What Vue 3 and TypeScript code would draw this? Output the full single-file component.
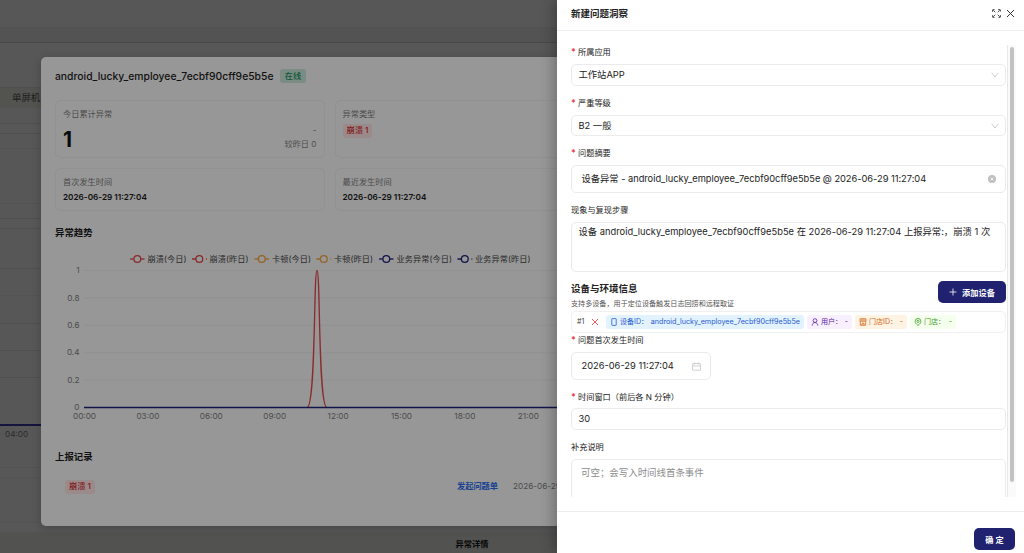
<script setup lang="ts">
interface Strip { h: number; tone: string; text?: string }
interface Legend { label: string; color: string; dashed: boolean; x: number }
interface Tag { kind: string; label: string; value: string; width: number }

const strips: Strip[] = [
  { h: 28, tone: 'head' },
  { h: 15, tone: 'bar' },
  { h: 45, tone: 'base' },
  { h: 20, tone: 'band', text: '单屏机' },
  { h: 16, tone: 'base' },
  { h: 10, tone: 'base' },
  { h: 15, tone: 'faint' },
  { h: 55, tone: 'faint' },
  { h: 15, tone: 'base' },
  { h: 10, tone: 'base' },
  { h: 40, tone: 'base' },
  { h: 27, tone: 'faint' },
  { h: 28, tone: 'base' },
  { h: 27, tone: 'base' },
  { h: 27, tone: 'base' },
  { h: 48, tone: 'axis' },
  { h: 42, tone: 'faint', text: '04:00' },
  { h: 10, tone: 'faint' },
  { h: 45, tone: 'faint' },
  { h: 10, tone: 'faint' },
  { h: 20, tone: 'foot' },
]

const red = '#8a2a2b'
const amber = '#966326'
const navy = '#12144a'
const legends: Legend[] = [
  { label: '崩溃(今日)', color: red, dashed: false, x: 75 },
  { label: '崩溃(昨日)', color: red, dashed: true, x: 137 },
  { label: '卡顿(今日)', color: amber, dashed: false, x: 199.5 },
  { label: '卡顿(昨日)', color: amber, dashed: true, x: 261.5 },
  { label: '业务异常(今日)', color: navy, dashed: false, x: 324 },
  { label: '业务异常(昨日)', color: navy, dashed: true, x: 402.5 },
]
const yTicks = ['1', '0.8', '0.6', '0.4', '0.2', '0']
const xTicks = ['00:00', '03:00', '06:00', '09:00', '12:00', '15:00', '18:00', '21:00']
const yAt = (i: number): number => 25.5 + i * 27.4
const xAt = (i: number): number => 29.5 + i * 63.4

const tags: Tag[] = [
  { kind: 'blue', label: '设备ID：', value: 'android_lucky_employee_7ecbf90cff9e5b5e', width: 198 },
  { kind: 'purple', label: '用户：', value: '-', width: 45 },
  { kind: 'orange', label: '门店ID：', value: '-', width: 52 },
  { kind: 'green', label: '门店：', value: '-', width: 46 },
]
</script>

<template>
  <div class="screen">
    <div class="page">
      <div v-for="(s, i) in strips" :key="i" class="strip" :class="s.tone" :style="{ height: s.h + 'px' }">
        <span v-if="s.text" :class="s.text === '04:00' ? 'tick' : 'tab'">{{ s.text }}</span>
        <b v-if="s.tone === 'foot'">异常详情</b>
      </div>
    </div>

    <section class="modal">
      <header class="m-head">
        <span class="m-title">android_lucky_employee_7ecbf90cff9e5b5e</span>
        <span class="online">在线</span>
      </header>
      <div class="cards">
        <div class="card">
          <span class="cap">今日累计异常</span>
          <div class="count">
            <strong>1</strong>
            <div class="compare"><span>-</span><span>较昨日 0</span></div>
          </div>
        </div>
        <div class="card">
          <span class="cap">异常类型</span>
          <span class="crash">崩溃 1</span>
        </div>
        <div class="card">
          <span class="cap">首次发生时间</span>
          <span class="time">2026-06-29 11:27:04</span>
        </div>
        <div class="card">
          <span class="cap">最近发生时间</span>
          <span class="time">2026-06-29 11:27:04</span>
        </div>
      </div>
      <h3 class="trend">异常趋势</h3>
      <svg class="chart" width="549" height="190" viewBox="0 0 549 190">
        <g v-for="l in legends" :key="l.label">
          <path :d="l.dashed ? `M${l.x} 14h4M${l.x + 14} 14h.8` : `M${l.x} 14h14.5`" :stroke="l.color" stroke-width="1.3" />
          <circle :cx="l.x + 7.3" cy="14" r="3.4" fill="#989898" :stroke="l.color" stroke-width="1.3" />
          <text :x="l.x + 17.5" y="17" class="lg" :textLength="l.label.length > 6 ? 55.5 : 39">{{ l.label }}</text>
        </g>
        <g v-for="(t, i) in yTicks" :key="t">
          <line x1="29" x2="549" :y1="yAt(i)" :y2="yAt(i)" stroke="#8f8f8f" stroke-width=".8" />
          <text x="24.5" :y="yAt(i) + 2.7" text-anchor="end" class="ax">{{ t }}</text>
        </g>
        <path d="M252 162.500C261 162.500 258.500 25.500 262 25.500S263 162.500 272 162.500" fill="none" :stroke="red" stroke-width="1.300" />
        <line x1="29" x2="549" y1="162.500" y2="162.500" :stroke="navy" stroke-width="1.300" />
        <text v-for="(t, i) in xTicks" :key="t" :x="xAt(i)" y="174" text-anchor="middle" class="ax">{{ t }}</text>
      </svg>
      <h3 class="records">上报记录</h3>
      <div class="record">
        <span class="crash">崩溃 1</span>
        <a>发起问题单</a>
        <time>2026-06-29 11:27:04</time>
      </div>
    </section>

    <aside class="drawer">
      <header class="d-head">
        <b>新建问题洞察</b>
        <svg class="shrink" width="9" height="9" viewBox="0 0 9 9"><path d="M3.300 3.300.9.900M.6 2.800V.600h2.200M5.700 3.300 8.100.900M6.200.600h2.200v2.200M3.300 5.700.9 8.100M.6 6.200v2.200h2.200M5.700 5.700l2.400 2.400M8.400 6.200v2.200H6.200" /></svg>
        <svg class="close" width="9" height="9" viewBox="0 0 9 9"><path d="m1 1 7 7M8 1 1 8" /></svg>
      </header>

      <div class="d-body">
        <div class="form">
          <label class="req">所属应用</label>
          <div class="field h22"><span>工作站APP</span><svg class="arrow" width="8" height="6" viewBox="0 0 8 6"><path d="m.7.800 3.300 4.200L7.300.800" /></svg></div>
          <label class="req">严重等级</label>
          <div class="field h21"><span>B2 一般</span><svg class="arrow" width="8" height="6" viewBox="0 0 8 6"><path d="m.7.800 3.300 4.200L7.300.800" /></svg></div>
          <label class="req">问题摘要</label>
          <div class="field h28 wide">
            <span class="summary">设备异常 - android_lucky_employee_7ecbf90cff9e5b5e @ 2026-06-29 11:27:04</span>
            <svg width="8" height="8" viewBox="0 0 8 8"><circle cx="4" cy="4" r="4" fill="#bfbfbf" /><path d="m2.600 2.600 2.800 2.800m0-2.800L2.600 5.400" stroke="#fff" stroke-width=".8" /></svg>
          </div>
          <label>现象与复现步骤</label>
          <div class="field area"><span class="steps">设备 android_lucky_employee_7ecbf90cff9e5b5e 在 2026-06-29 11:27:04 上报异常:，崩溃 1 次</span></div>

          <div class="section">
            <div class="s-text"><b>设备与环境信息</b><small>支持多设备，用于定位设备触发日志回捞和远程取证</small></div>
            <button class="add"><svg width="8" height="8" viewBox="0 0 8 8"><path d="M4 .500v7M.500 4h7" /></svg>添加设备</button>
          </div>
          <div class="device">
            <span class="no">#1</span>
            <svg class="del" width="8" height="8" viewBox="0 0 8 8"><path d="m1 1 6 6M7 1 1 7" /></svg>
            <span v-for="t in tags" :key="t.kind" class="tag" :class="t.kind" :style="{ width: t.width + 'px' }">
              <svg width="8" height="8" viewBox="0 0 8 8">
                <rect v-if="t.kind === 'blue'" x="1.800" y=".600" width="4.400" height="6.800" rx=".5" />
                <path v-else-if="t.kind === 'purple'" d="M4 .700a1.900 1.900 0 1 1 0 3.800 1.900 1.900 0 0 1 0-3.800M1.200 7.600C1.300 5.800 2.400 4.500 4 4.500s2.700 1.300 2.800 3.100" />
                <path v-else-if="t.kind === 'orange'" d="M1 .800h6v2.400H1zM1.300 3.200v4h5.400v-4M3 .800v2.400M5 .800v2.400M3 7.200V5.200h2v2" />
                <g v-else><path d="M4 7.500C2 5.900 1.100 4.700 1.100 3.400a2.900 2.900 0 0 1 5.800 0C6.900 4.700 6 5.900 4 7.500z" /><circle cx="4" cy="3.400" r="1.100" /></g>
              </svg>
              <span class="t-label">{{ t.label }}</span><span class="t-value">{{ t.value }}</span>
            </span>
          </div>

          <label class="req first">问题首次发生时间</label>
          <div class="field h28 wide date">
            <span class="dt">2026-06-29 11:27:04</span>
            <svg width="9" height="9" viewBox="0 0 9 9"><path d="M.6 1.600h7.800v6.600H.6zM.6 4h7.800M2.700.5v2M6.300.5v2" fill="none" stroke="#c4c4c4" stroke-width=".8" /></svg>
          </div>
          <label class="req window">时间窗口（前后各 N 分钟）</label>
          <div class="field h22"><span>30</span></div>
          <label class="extra">补充说明</label>
          <div class="field area last"><span class="hint">可空；会写入时间线首条事件</span></div>
        </div>
        <div class="track"><div class="thumb"></div></div>
      </div>

      <footer class="d-foot"><button class="ok">确 定</button></footer>
    </aside>
  </div>
</template>

<style>
html, body { margin: 0; overflow: hidden; }
</style>

<style scoped>
* { box-sizing: border-box; }
.screen {
  position: relative; width: 1024px; height: 553px; overflow: hidden;
  font-family: Inter, "Noto Sans CJK SC", sans-serif; font-size: 9.3px; line-height: 1.4; color: #222;
  background: #575757; white-space: nowrap;
}
.page { display: flex; flex-direction: column; }
.strip { flex: none; border-bottom: 1px solid #4f4f4f; display: flex; color: #1c1c1c; }
.strip.head { background: #575757; border-color: #535353; }
.strip.bar { background: #535353; border-color: #484848; }
.strip.band { background: #53534f; border: 0; align-items: center; padding: 0 0 0 12px; }
.strip.faint { border-color: #535353; }
.strip.axis { border-bottom: 2px solid #14143c; }
.strip.foot { background: #525250; border: 0; justify-content: center; align-items: center; padding: 3px 80px 0 0; font-size: 8.200px; color: #080808; }
.tab { font-size: 9.400px; }
.tick { font-size: 8.200px; padding: 3px 0 0 5px; color: #2b2b2b; }

.modal {
  position: absolute; left: 41px; top: 57px; width: 577px; height: 469px; padding: 10px 14px;
  border-radius: 5px; background: #979797; box-shadow: 0 2px 10px rgba(0, 0, 0, .2);
  display: flex; flex-direction: column;
}
.m-head { display: flex; align-items: center; height: 18px; gap: 7px; }
.m-title { font-size: 10.350px; font-weight: 500; color: #111; width: 218px; padding-top: 1px; }
.online { height: 14px; width: 26px; line-height: 14px; text-align: center; border-radius: 3px; background: #7b8c84; color: #10573a; font-size: 8.200px; font-weight: 500; }
.cards { display: grid; grid-template-columns: 269.500px 269.500px; grid-template-rows: 58px 43px; gap: 10px; margin-top: 15px; }
.card { border: 1px solid #919191; border-radius: 5px; padding: 7px; display: flex; flex-direction: column; align-items: flex-start; }
.cap { font-size: 8.200px; line-height: 12px; color: #4a4a4a; }
.count { display: flex; justify-content: space-between; width: 100%; line-height: 1; }
.count strong { font-size: 21px; line-height: 26px; color: #0b0b0b; padding-top: 7px; }
.compare { display: flex; flex-direction: column; align-items: flex-end; font-size: 8.200px; line-height: 14px; color: #4f4f4f; padding-top: 3px; }
.crash { font-size: 8.200px; font-weight: 500; height: 14px; line-height: 13px; padding: 0 4px; border-radius: 3px; background: #9a8a89; color: #821719; }
.card .crash { margin-top: 4px; }
.time { font-size: 8.200px; font-weight: 600; line-height: 19px; color: #101010; }
h3 { margin: 0; font-size: 9.400px; line-height: 14px; font-weight: 700; color: #101010; }
.trend { margin-top: 15px; }
.chart { margin-top: 5px; flex: none; }
.lg { font-size: 8.200px; fill: #282828; }
.ax { font-size: 8.200px; fill: #4a4a4a; }
.records { margin-top: 15px; }
.record { display: flex; align-items: center; margin: 16px 0 0 10px; font-size: 8.200px; }
.record a { margin-left: auto; color: #153f92; font-weight: 600; }
.record time { width: 91px; margin-left: 15px; color: #4c4c4c; }

.drawer {
  position: absolute; right: 0; top: 0; width: 467px; height: 553px; background: #fff;
  display: flex; flex-direction: column; box-shadow: -4px 0 12px rgba(0, 0, 0, .24);
}
.d-head { height: 31px; flex: none; border-bottom: 1px solid #ededed; display: flex; align-items: center; padding: 0 9px 3px 14px; gap: 5px; }
.d-head b { font-size: 9.500px; margin-right: auto; font-weight: 600; }
.d-head svg path { fill: none; stroke: #333; stroke-width: 1; }
.d-head .shrink path { stroke-width: .9; stroke-dasharray: 1.800 .5; }
.d-body { margin-top: 14px; height: 452px; flex: none; overflow: hidden; display: flex; padding-left: 14px; }
.form { width: 435px; display: flex; flex-direction: column; }
label { display: block; flex: none; height: 14px; line-height: 14px; margin-bottom: 5px; font-size: 8.200px; }
.field + label { margin-top: 10px; }
.req::before { content: "*"; color: #e5383d; display: inline-block; width: 7px; font-size: 9px; font-weight: 600; }
.field { flex: none; border: 1px solid #ebebeb; border-radius: 5px; padding: 0 6.500px; display: flex; align-items: center; justify-content: space-between; }
.field span { font-size: 9.300px; }
.field .summary { letter-spacing: -.03px; }
.field .steps { letter-spacing: .02px; }
.h21 { height: 21px; }
.h22 { height: 22px; }
.h28 { height: 28px; }
.wide { padding: 0 9.500px; }
.date { width: 140px; }
.arrow path { fill: none; stroke: #c0c0c0; stroke-width: .8; }
.area { height: 50px; align-items: flex-start; padding-top: 2px; }
.last { padding: 6px 9px; }
.field .hint { color: #8c8c8c; font-size: 9.450px; }
.section { height: 39px; flex: none; display: flex; justify-content: space-between; padding-top: 9px; }
.s-text { display: flex; flex-direction: column; }
.s-text b { font-size: 9.500px; line-height: 15px; font-weight: 600; }
.s-text small { font-size: 7.100px; line-height: 15px; color: #555; }
button { border: 0; border-radius: 5px; background: #20226f; color: #fff; font: 600 8.200px Inter, "Noto Sans CJK SC", sans-serif; padding: 0; }
.add { width: 68px; height: 22px; display: flex; align-items: center; justify-content: center; gap: 5px; }
.add path { fill: none; stroke: #fff; stroke-width: .8; }
.device { height: 22px; flex: none; border: 1px solid #f0f0f0; border-radius: 5px; display: flex; align-items: center; gap: 3px; padding-left: 5px; font-size: 7.050px; }
.no { width: 11px; color: #444; }
.del { margin-right: 4px; }
.del path { stroke: #e5484d; stroke-width: .9; }
.tag { height: 14px; border-radius: 3px; display: flex; align-items: center; padding: 0 4px; white-space: nowrap; }
.tag svg { flex: none; margin-right: 2px; fill: none; stroke: currentColor; stroke-width: .8; }
.t-value { margin-left: auto; }
.blue .t-value { font-size: 7.180px; }
.blue { background: #e3f2ff; color: #1f5bd0; }
.purple { background: #f8efff; color: #5a24a4; }
.orange { background: #fff3e4; color: #cf6a21; }
.green { background: #f4ffed; color: #3f9a25; }
.first { margin-top: 0; }
.field + .window { margin-top: 9.500px; margin-bottom: 4.500px; }
.field + .extra { margin-top: 9.500px; }
.track { width: 9px; margin-left: 1px; background: #fafafa; border-left: 1px solid #e8e8e8; padding: 2px 0 0 2px; }
.thumb { width: 4px; height: 435px; border-radius: 2px; background: #c2c2c2; }
.d-foot { margin-top: 14px; border-top: 1px solid #ededed; height: 42px; display: flex; justify-content: flex-end; padding: 16px 9px 0 0; }
.ok { width: 41px; height: 22px; }
</style>
